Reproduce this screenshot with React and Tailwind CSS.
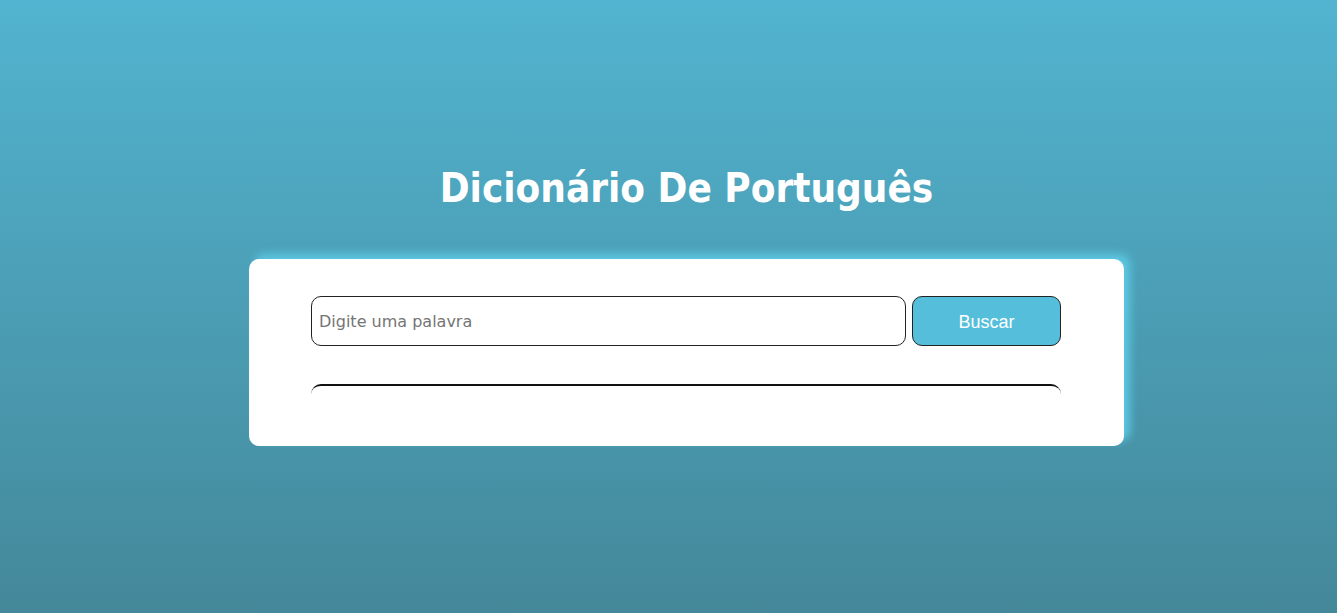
export default function App() {
  return (
    <div className="min-h-[613px] w-full bg-gradient-to-b from-[#52b4d0] to-[#44889a] pl-[36px] pt-[164px] font-['DejaVu_Sans',sans-serif]">
      <h1 className="text-center text-[40px] font-bold leading-[48px] text-white font-['DejaVu_Sans_Condensed','DejaVu_Sans',sans-serif]">
        Dicionário De Português
      </h1>
      <div className="mx-auto mt-[47px] w-[875px] rounded-[10px] bg-white px-[62px] pt-[37px] pb-[50px] shadow-[6px_-5px_8px_#5cc8e2]">
        <div className="flex gap-[6px]">
          <input
            type="text"
            placeholder="Digite uma palavra"
            className="h-[50px] w-[595px] rounded-[10px] border border-[#222] bg-white px-[7px] text-[16px] text-[#333] outline-none placeholder:text-[#757575] font-['DejaVu_Sans',sans-serif]"
          />
          <button className="h-[50px] w-[149px] rounded-[10px] border border-[#222] bg-[#55bfdb] pt-[2px] text-[18px] text-white font-['Liberation_Sans',sans-serif]">
            Buscar
          </button>
        </div>
        <div className="mt-[38px] h-[12px] w-[750px] rounded-t-[10px] border-t-2 border-[#111]"></div>
      </div>
    </div>
  );
}
